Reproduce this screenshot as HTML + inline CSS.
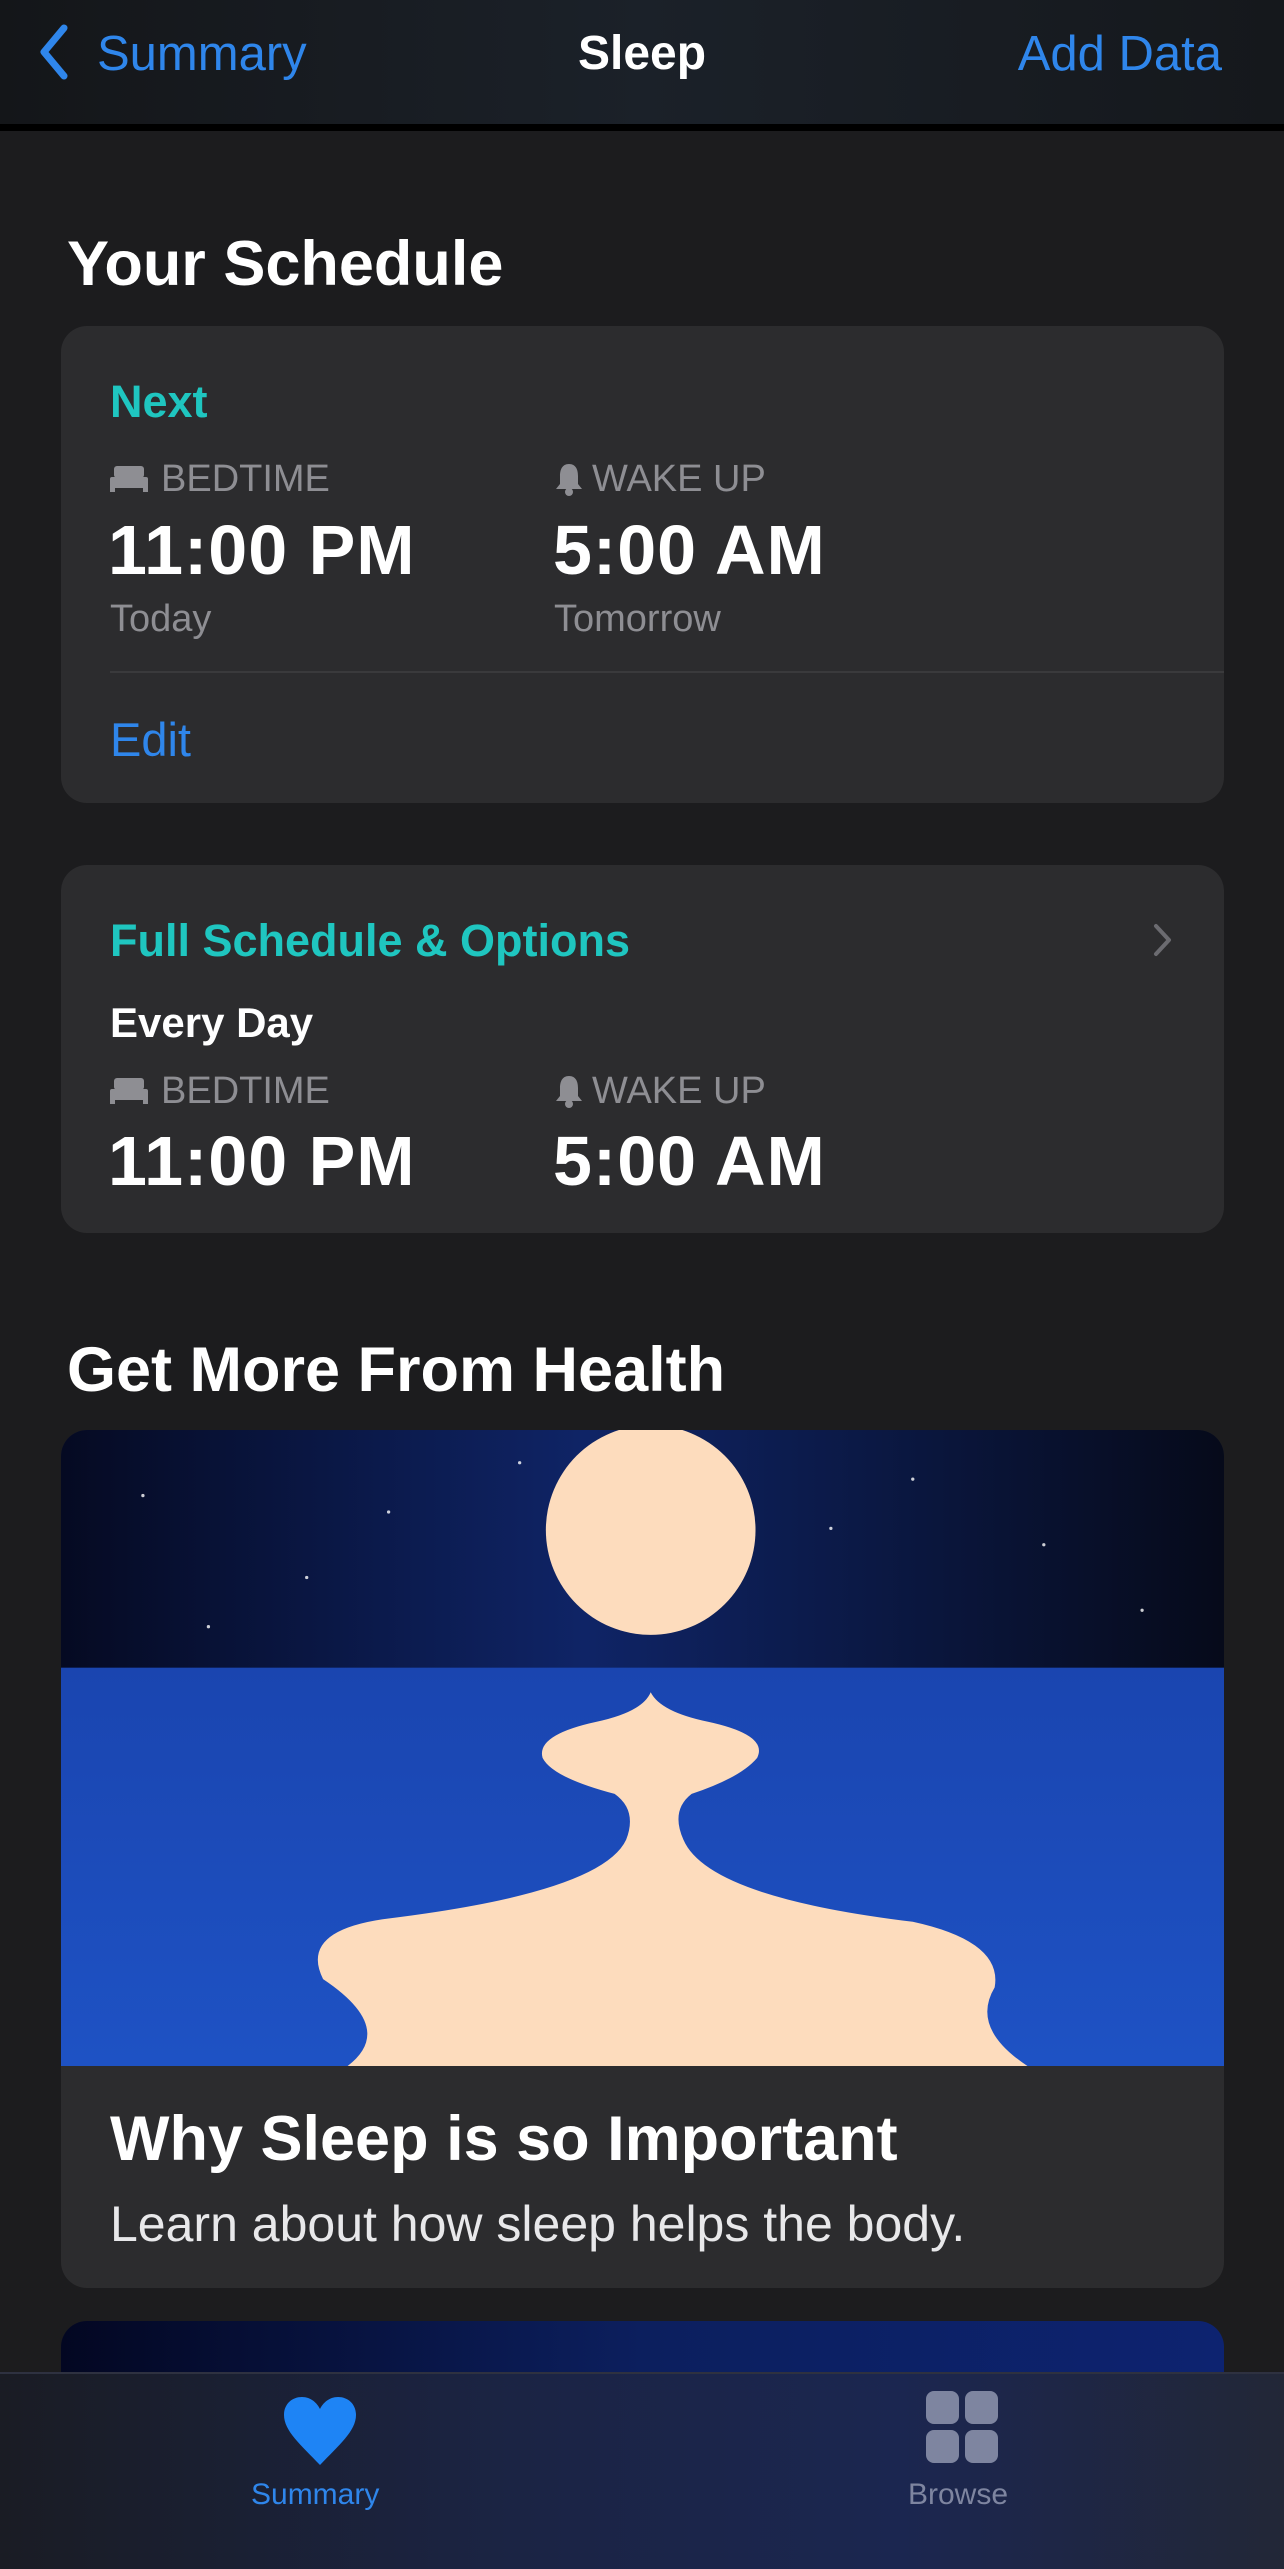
<!DOCTYPE html>
<html style="overflow:hidden"><head><meta charset="utf-8"><style>
*{margin:0;padding:0;box-sizing:border-box}
html,body{width:1284px;height:2569px;overflow:hidden}
body{background:#1c1c1e;font-family:"Liberation Sans",sans-serif;position:relative;color:#fff}
.abs{position:absolute;white-space:nowrap}
.nav{position:absolute;left:0;top:0;width:1284px;height:124px;background:linear-gradient(90deg,#141619,#1b2129 50%,#15181c)}
.line{position:absolute;left:0;top:124px;width:1284px;height:7px;background:#000}
.card{position:absolute;left:61px;width:1163px;background:#2c2c2e;border-radius:26px;overflow:hidden}
.teal{color:#1fc6c0;font-weight:bold;font-size:45px}
.lbl{color:#8e8e93;font-size:38px}
.time{font-size:70px;font-weight:bold;letter-spacing:1px}
.sub{color:#8e8e93;font-size:38px}
.blue{color:#2f86eb}
</style></head><body>
<div class="nav"></div>
<div class="line"></div>
<svg class="abs" style="left:36px;top:24px" width="36" height="56" viewBox="0 0 36 56"><path d="M28 4 L8 28 L28 52" stroke="#2f86eb" stroke-width="7" fill="none" stroke-linecap="round" stroke-linejoin="round"/></svg>
<div class="abs blue" style="left:97px;top:26px;font-size:49px">Summary</div>
<div class="abs" style="left:0;width:1284px;text-align:center;top:26px;font-size:48px;font-weight:bold">Sleep</div>
<div class="abs blue" style="right:62px;top:26px;font-size:49px">Add Data</div>

<div class="abs" style="left:67px;top:228px;font-size:63px;font-weight:bold">Your Schedule</div>

<div class="card" style="top:326px;height:477px">
  <div class="abs teal" style="left:49px;top:50px">Next</div>
  <svg class="abs" style="left:49px;top:140px" width="38" height="26" viewBox="0 0 38 26"><rect x="4" y="0" width="30" height="12" rx="3" fill="#8e8e93"/><rect x="0" y="11" width="38" height="11" rx="2" fill="#8e8e93"/><rect x="0" y="20" width="5" height="6" fill="#8e8e93"/><rect x="33" y="20" width="5" height="6" fill="#8e8e93"/></svg>
  <div class="abs lbl" style="left:100px;top:132px">BEDTIME</div>
  <svg class="abs" style="left:493px;top:136px" width="30" height="34" viewBox="0 0 30 34"><path d="M15 2 C8 2 6 8 6 14 L6 22 L2 27 L28 27 L24 22 L24 14 C24 8 22 2 15 2Z" fill="#8e8e93"/><circle cx="15" cy="30" r="4" fill="#8e8e93"/></svg>
  <div class="abs lbl" style="left:531px;top:132px">WAKE UP</div>
  <div class="abs time" style="left:47px;top:184px">11:00 PM</div>
  <div class="abs time" style="left:492px;top:184px">5:00 AM</div>
  <div class="abs sub" style="left:49px;top:272px">Today</div>
  <div class="abs sub" style="left:493px;top:272px">Tomorrow</div>
  <div class="abs" style="left:49px;top:345px;width:1114px;height:2px;background:#3a3a3c"></div>
  <div class="abs blue" style="left:49px;top:386px;font-size:47px">Edit</div>
</div>

<div class="card" style="top:865px;height:368px">
  <div class="abs teal" style="left:49px;top:50px">Full Schedule &amp; Options</div>
  <svg class="abs" style="left:1092px;top:58px" width="20" height="34" viewBox="0 0 20 34"><path d="M3 3 L16 17 L3 31" stroke="#6b6b70" stroke-width="4" fill="none" stroke-linecap="round" stroke-linejoin="round"/></svg>
  <div class="abs" style="left:49px;top:134px;font-size:42px;font-weight:bold">Every Day</div>
  <svg class="abs" style="left:49px;top:213px" width="38" height="26" viewBox="0 0 38 26"><rect x="4" y="0" width="30" height="12" rx="3" fill="#8e8e93"/><rect x="0" y="11" width="38" height="11" rx="2" fill="#8e8e93"/><rect x="0" y="20" width="5" height="6" fill="#8e8e93"/><rect x="33" y="20" width="5" height="6" fill="#8e8e93"/></svg>
  <div class="abs lbl" style="left:100px;top:205px">BEDTIME</div>
  <svg class="abs" style="left:493px;top:209px" width="30" height="34" viewBox="0 0 30 34"><path d="M15 2 C8 2 6 8 6 14 L6 22 L2 27 L28 27 L24 22 L24 14 C24 8 22 2 15 2Z" fill="#8e8e93"/><circle cx="15" cy="30" r="4" fill="#8e8e93"/></svg>
  <div class="abs lbl" style="left:531px;top:205px">WAKE UP</div>
  <div class="abs time" style="left:47px;top:256px">11:00 PM</div>
  <div class="abs time" style="left:492px;top:256px">5:00 AM</div>
</div>

<div class="abs" style="left:67px;top:1334px;font-size:63px;font-weight:bold">Get More From Health</div>

<div class="card" style="top:1430px;height:858px">
  <svg class="abs" style="left:0;top:0" width="1163" height="636" viewBox="0 0 710 388" preserveAspectRatio="none">
    <defs><linearGradient id="sky" x1="0" x2="1"><stop offset="0" stop-color="#050a22"/><stop offset="0.45" stop-color="#0f2466"/><stop offset="1" stop-color="#060a1a"/></linearGradient>
    <linearGradient id="sea" x1="0" y1="0" x2="0" y2="1"><stop offset="0" stop-color="#1a45b0"/><stop offset="1" stop-color="#1e52c4"/></linearGradient></defs>
    <rect width="710" height="146" fill="url(#sky)"/>
    <rect y="145" width="710" height="243" fill="url(#sea)"/>
    <circle cx="360" cy="61" r="64" fill="#fddcbd"/>
    <g fill="#fff" opacity="0.8"><circle cx="50" cy="40" r="1"/><circle cx="200" cy="50" r="1"/><circle cx="150" cy="90" r="1"/><circle cx="520" cy="30" r="1"/><circle cx="600" cy="70" r="1"/><circle cx="470" cy="60" r="1"/><circle cx="660" cy="110" r="1"/><circle cx="90" cy="120" r="1"/><circle cx="280" cy="20" r="1"/></g>
    <path d="M360 160 Q366 172 395 178 Q432 186 425 200 Q415 212 385 222 Q372 232 380 250 Q395 285 520 300 Q575 312 570 340 Q555 365 590 388 L175 388 Q205 365 160 335 Q145 305 200 298 Q330 282 345 250 Q352 232 338 222 Q300 212 294 200 Q290 186 327 178 Q355 172 360 160Z" fill="#fddcbd"/>
  </svg>
  <div class="abs" style="left:49px;top:673px;font-size:63px;font-weight:bold">Why Sleep is so Important</div>
  <div class="abs" style="left:49px;top:765px;font-size:50px;color:#e8e8ea">Learn about how sleep helps the body.</div>
</div>

<div class="card" style="top:2321px;height:248px;border-radius:26px 26px 0 0;background:linear-gradient(90deg,#030722,#0c1f5e 50%,#0d2370)"></div>

<div class="abs" style="left:0;top:2372px;width:1284px;height:197px;background:linear-gradient(90deg,#1a1c24,#1b2444 40%,#1b2650 70%,#222737);border-top:2px solid #2e3140"></div>
<svg class="abs" style="left:281px;top:2395px" width="78" height="72" viewBox="0 0 78 72"><path d="M39 70 C20 50 3 36 3 20 C3 9 11 2 21 2 C30 2 36 8 39 14 C42 8 48 2 57 2 C67 2 75 9 75 20 C75 36 58 50 39 70Z" fill="#1e84f5"/></svg>
<div class="abs" style="left:251px;top:2478px;font-size:30px;color:#2f86eb">Summary</div>
<svg class="abs" style="left:926px;top:2391px" width="72" height="72" viewBox="0 0 72 72"><rect x="0" y="0" width="33" height="33" rx="8" fill="#7e85a0"/><rect x="39" y="0" width="33" height="33" rx="8" fill="#7e85a0"/><rect x="0" y="39" width="33" height="33" rx="8" fill="#7e85a0"/><rect x="39" y="39" width="33" height="33" rx="8" fill="#7e85a0"/></svg>
<div class="abs" style="left:908px;top:2478px;font-size:30px;color:#7e85a0">Browse</div>
</body></html>
